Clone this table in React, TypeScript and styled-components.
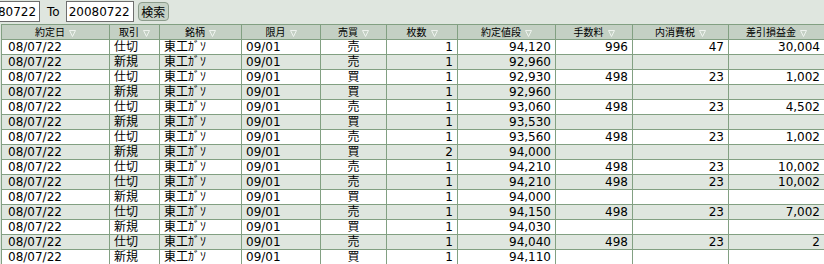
import React from "react";
import styled, { createGlobalStyle } from "styled-components";

const GlobalStyle = createGlobalStyle`
  html, body { margin: 0; padding: 0; background: #dfe6df; }
  body { font-family: "DejaVu Sans", "Noto Sans CJK JP", sans-serif; color: #000; }
`;

const Page = styled.div`
  width: 824px;
  height: 264px;
  overflow: hidden;
  background: #dfe6df;
`;

const Toolbar = styled.div`
  display: flex;
  align-items: center;
  height: 22px;
  margin-left: -28px;
  padding-top: 1px;
  box-sizing: border-box;
`;

const DateInput = styled.input`
  box-sizing: border-box;
  width: 68px;
  height: 21px;
  margin: 0;
  padding: 0 2px;
  border: 1px solid #6e6e6e;
  background: #fff;
  font-family: "DejaVu Sans", sans-serif;
  font-size: 12px;
  color: #000;
  outline: none;
`;

const Label = styled.span`
  font-size: 12px;
  margin: 0 6px 0 7px;
`;

const SearchButton = styled.button`
  box-sizing: border-box;
  height: 19px;
  width: 31px;
  margin-left: 4px;
  padding: 0;
  border: 1px solid #8c9c8c;
  border-radius: 4px;
  background: #c6d2c6;
  font-family: "Noto Sans CJK JP", sans-serif;
  font-size: 12px;
  line-height: 17px;
  color: #000;
`;

const Table = styled.table`
  margin: 2px 0 0 1px;
  border-collapse: separate;
  border-spacing: 0;
  table-layout: fixed;
  width: 824px;
  border-left: 1px solid #82a082;
  border-top: 1px solid #82a082;
`;

const HeadCell = styled.th`
  box-sizing: border-box;
  height: 15px;
  padding: 0;
  border-right: 1px solid #82a082;
  border-bottom: 1px solid #82a082;
  background: #c4d0c4;
  font-family: "Noto Sans CJK JP", sans-serif;
  font-weight: normal;
  font-size: 10px;
  line-height: 14px;
  text-align: center;
  white-space: nowrap;
`;

const SortMark = styled.svg`
  width: 7px;
  height: 7px;
  margin-left: 4px;
  vertical-align: -1px;
`;

const Row = styled.tr<{ $alt: boolean }>`
  background: ${(p) => (p.$alt ? "#dfe6df" : "#ffffff")};
`;

const Cell = styled.td<{ $align: "left" | "right" | "center"; $pad?: number }>`
  box-sizing: border-box;
  height: 15px;
  padding: 0 4px 0 ${(p) => p.$pad ?? 4}px;
  border-right: 1px solid #82a082;
  border-bottom: 1px solid #82a082;
  font-size: 12px;
  line-height: 14px;
  text-align: ${(p) => p.$align};
  white-space: nowrap;
  overflow: hidden;
`;

const widths = [108, 50, 82, 79, 66, 71, 98, 77, 96, 96];
const headers = ["約定日", "取引", "銘柄", "限月", "売買", "枚数", "約定値段", "手数料", "内消費税", "差引損益金"];
const aligns: ("left" | "right" | "center")[] = ["left", "left", "left", "left", "center", "right", "right", "right", "right", "right"];

type R = [string, string, string, string, string, string, string];
const rows: R[] = [
  ["仕切", "売", "1", "94,120", "996", "47", "30,004"],
  ["新規", "売", "1", "92,960", "", "", ""],
  ["仕切", "買", "1", "92,930", "498", "23", "1,002"],
  ["新規", "買", "1", "92,960", "", "", ""],
  ["仕切", "売", "1", "93,060", "498", "23", "4,502"],
  ["新規", "買", "1", "93,530", "", "", ""],
  ["仕切", "売", "1", "93,560", "498", "23", "1,002"],
  ["新規", "買", "2", "94,000", "", "", ""],
  ["仕切", "売", "1", "94,210", "498", "23", "10,002"],
  ["仕切", "売", "1", "94,210", "498", "23", "10,002"],
  ["新規", "買", "1", "94,000", "", "", ""],
  ["仕切", "売", "1", "94,150", "498", "23", "7,002"],
  ["新規", "買", "1", "94,030", "", "", ""],
  ["仕切", "売", "1", "94,040", "498", "23", "2"],
  ["新規", "買", "1", "94,110", "", "", ""],
];

const Triangle = () => (
  <SortMark viewBox="0 0 7 7">
    <polygon points="0.5,0.5 6.5,0.5 3.5,6.5" fill="none" stroke="#eef3ee" strokeWidth="1" />
  </SortMark>
);

export default function App() {
  return (
    <Page>
      <GlobalStyle />
      <Toolbar>
        <DateInput defaultValue="20080722" />
        <Label>To</Label>
        <DateInput defaultValue="20080722" />
        <SearchButton>検索</SearchButton>
      </Toolbar>
      <Table>
        <colgroup>
          {widths.map((w, i) => (
            <col key={i} style={{ width: w }} />
          ))}
        </colgroup>
        <thead>
          <tr>
            {headers.map((h) => (
              <HeadCell key={h}>
                {h}
                <Triangle />
              </HeadCell>
            ))}
          </tr>
        </thead>
        <tbody>
          {rows.map((r, i) => {
            const cells = ["08/07/22", r[0], "東工ｶﾞｿ", "09/01", r[1], r[2], r[3], r[4], r[5], r[6]];
            return (
              <Row key={i} $alt={i % 2 === 1}>
                {cells.map((c, j) => (
                  <Cell key={j} $align={aligns[j]} $pad={j === 0 ? 6 : 4}>
                    {c}
                  </Cell>
                ))}
              </Row>
            );
          })}
        </tbody>
      </Table>
    </Page>
  );
}
